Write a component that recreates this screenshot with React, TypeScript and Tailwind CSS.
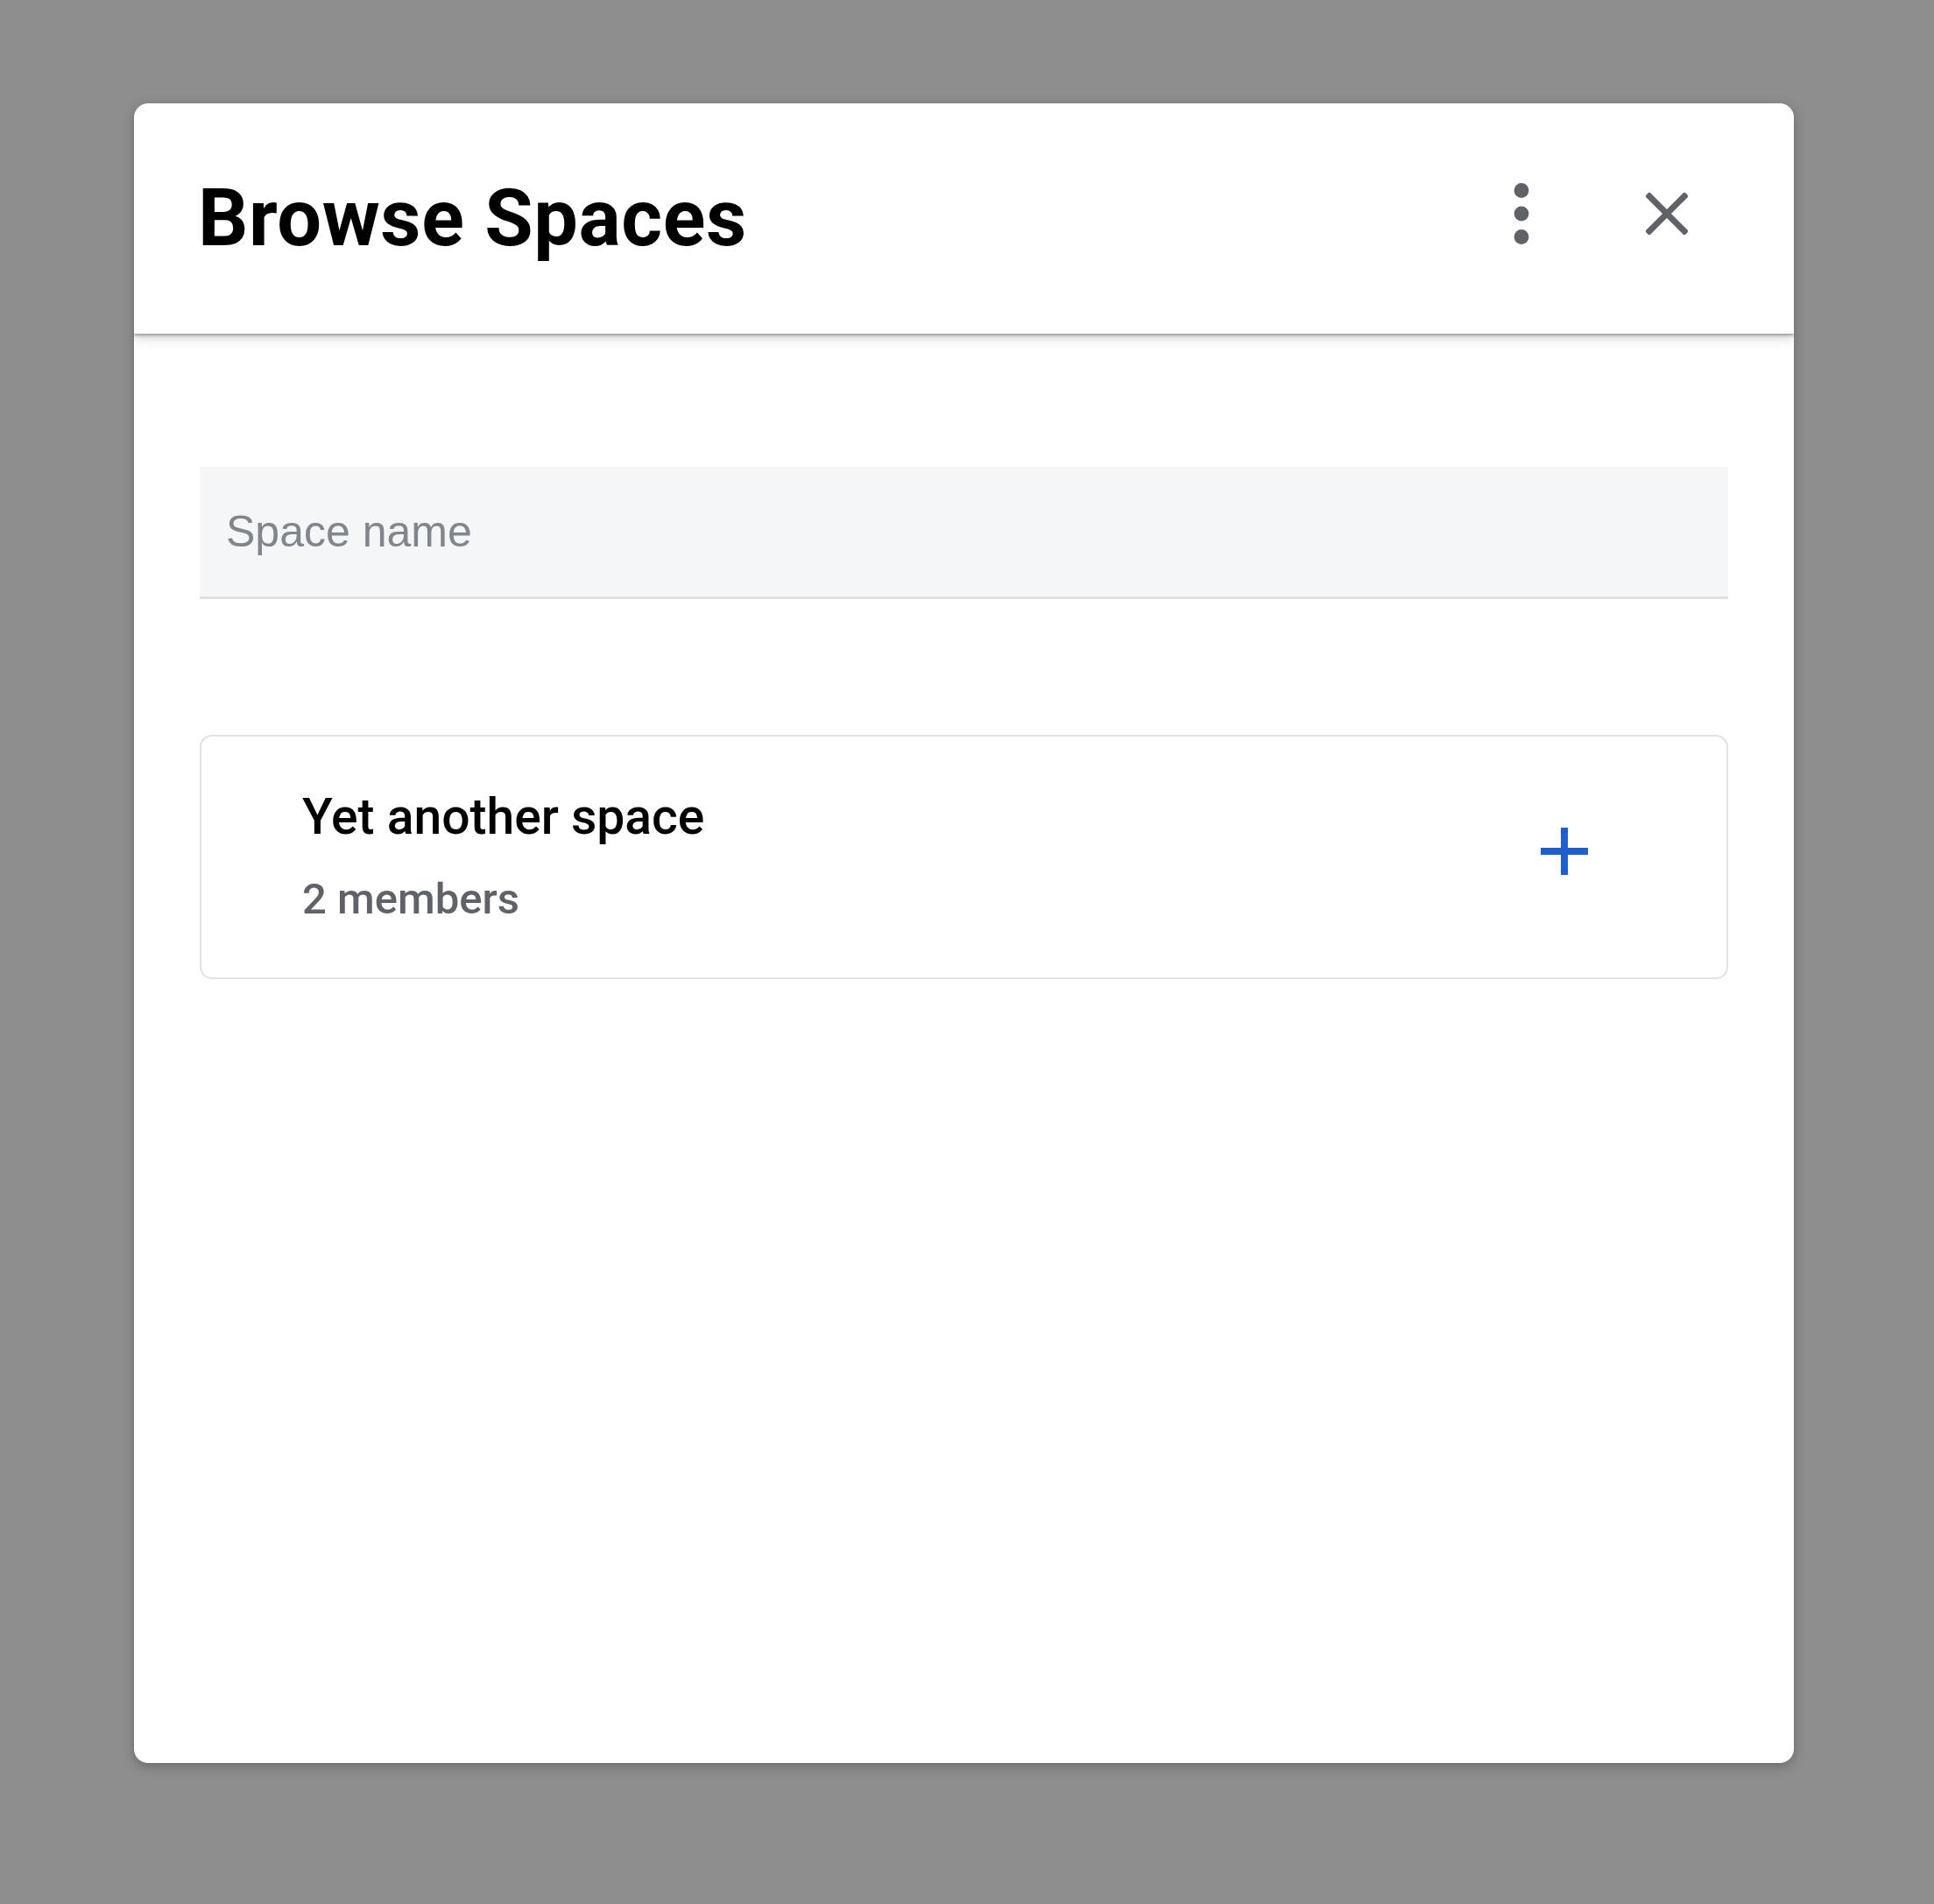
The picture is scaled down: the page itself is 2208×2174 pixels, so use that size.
import React from "react";

export default function App() {
  return (
    <div className="w-full h-[2174px] bg-[#8e8e8e] pt-[118px] pl-[153px]" style={{ fontFamily: "Roboto, 'Liberation Sans', sans-serif" }}>
      <div className="w-[1895px] h-[1895px] bg-white rounded-[16px] shadow-[0_4px_14px_rgba(0,0,0,0.25)] flex flex-col overflow-hidden">
        <div className="h-[263px] shrink-0 flex items-center pl-[73px] pr-[92px] shadow-[0_2px_3px_rgba(0,0,0,0.3),0_5px_12px_rgba(0,0,0,0.18)] relative z-10">
          <div className="text-[90px] font-bold text-[#000] tracking-[0.6px]">Browse Spaces</div>
          <div className="ml-auto flex items-center gap-[60px] -mt-[12px]">
            <div className="w-[106px] h-[106px] flex items-center justify-center">
              <svg width="106" height="106" viewBox="0 0 24 24" fill="#5f6368">
                <circle cx="12" cy="6" r="1.9" />
                <circle cx="12" cy="12" r="1.9" />
                <circle cx="12" cy="18" r="1.9" />
              </svg>
            </div>
            <div className="w-[106px] h-[106px] flex items-center justify-center">
              <svg width="48" height="48" viewBox="0 0 48 48" stroke="#5f6368" strokeWidth="7" strokeLinecap="square">
                <line x1="4" y1="4" x2="44" y2="44" />
                <line x1="44" y1="4" x2="4" y2="44" />
              </svg>
            </div>
          </div>
        </div>
        <div className="px-[75px] pt-[152px] flex flex-col">
          <div className="h-[151px] bg-[#f5f6f7] border-b-[3px] border-[#e0e0e0] flex items-center pl-[30px]">
            <span className="text-[50px] text-[#80868b] font-['Liberation_Sans',Arial,sans-serif]">Space name</span>
          </div>
          <div className="mt-[155px] h-[279px] border-[2px] border-[#e3e3e3] rounded-[14px] flex items-center pl-[115px] pr-[132px]">
            <div className="flex flex-col -mt-[4px]">
              <div className="text-[57px] leading-[68px] font-medium text-[#000]">Yet another space</div>
              <div className="mt-[32px] text-[49px] leading-[56px] font-medium text-[#5f6368]">2 members</div>
            </div>
            <div className="ml-auto w-[106px] h-[106px] flex items-center justify-center -mt-[14px]">
              <svg width="54" height="54" viewBox="0 0 54 54" stroke="#1d60cd" strokeWidth="8">
                <line x1="27" y1="0" x2="27" y2="54" />
                <line x1="0" y1="27" x2="54" y2="27" />
              </svg>
            </div>
          </div>
        </div>
      </div>
    </div>
  );
}
